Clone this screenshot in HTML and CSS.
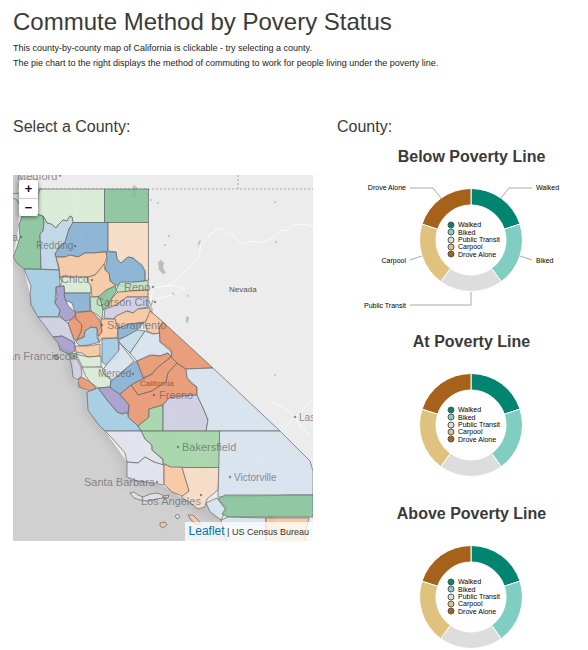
FILE: index.html
```html
<!DOCTYPE html>
<html lang="en">
<head>
<meta charset="utf-8">
<title>Commute Method by Povery Status</title>
<link rel="stylesheet" href="styles.css">
</head>
<body>
<header>
  <h1>Commute Method by Povery Status</h1>
  <p>This county-by-county map of California is clickable - try selecting a county.</p>
  <p>The pie chart to the right displays the method of commuting to work for people living under the poverty line.</p>
</header>
<main class="columns">
  <section>
    <h2>Select a County:</h2>
    <div class="map">
      <svg class="map-canvas" viewBox="13 175 300 366" preserveAspectRatio="xMidYMid slice" role="img" aria-label="Map of California counties">
        <defs>
          <filter id="shade" x="-20%" y="-20%" width="140%" height="140%"><feGaussianBlur stdDeviation="5"/></filter>
        </defs>
        <rect class="sea" x="13" y="175" width="300" height="366"/>
        <path class="coast-shade" filter="url(#shade)" d="M21 175L18 195L19 225L13 257L24 269L30 294L38 317L58 343L70 355L73 377L88 392L88 410L105 431L127 462L127 477L164 486L182 498L200 509L221 520L235 545"/>
        <path class="land" d="M21 175L18 190L19 225L13 257L24 269L30 294L38 317L58 343L75 355L73 377L88 392L88 410L105 431L127 462L127 477L164 486L182 498L200 509L206 503L221 520L227 541H313V175Z"/>
        <g class="roads">
          <path d="M153 288L165 286L172 284L178 277L187 270L193 264L199 257L201 244L208 239L210 234L221 228L226 232L233 235L240 243L243 244L253 241L260 243L271 239L280 231L287 230L292 226L302 224L313 226"/>
          <path d="M153 288L151 299L150 309M165 286L176 286L185 289M185 289L168 296L156 299"/>
          <path d="M295 417L286 409L271 401M295 417L304 409L312 399M295 417L301 428L310 435M295 417L283 430L276 445L257 461L240 471L226 485"/>
          <path d="M72 190L78 202L77 216L85 228L80 247L84 269L91 285L98 300L103 316"/>
          <path d="M103 325L112 350L128 368L150 386L164 403L180 428L196 447L203 468L211 489"/>
          <path d="M78 365L93 385L110 408L126 430L148 450L161 471L185 485L211 497"/>
          <path d="M180 432L215 448L254 461L311 484M110 328L132 321L151 316"/>
        </g>
        <g class="lakes">
          <path d="M133 185L137 187L137 193L134 199L131 197L133 193Z"/>
          <path d="M158 262L161 260L164 263L163 268L166 273L163 274L159 270Z"/>
          <path d="M151 306L153 309L152 314L150 311Z"/>
          <path d="M186 316L189 317L188 323L186 322Z"/>
          <path d="M198 243L200 240L201 241L199 245L199 248ZM172 292L175 294L173 295ZM186 296L189 294L188 297Z"/>
          <path d="M268 513L273 518L280 525L277 529L269 521Z"/>
          <circle cx="139" cy="208" r="1"/><circle cx="151" cy="200" r="1"/><circle cx="158" cy="203" r="1"/><circle cx="169" cy="236" r="1"/><circle cx="165" cy="245" r="1"/><circle cx="275" cy="202" r="1"/><circle cx="276" cy="242" r="1"/><circle cx="275" cy="375" r="1"/>
        </g>
        <path class="state-line" d="M148 189H313M238 175V189M40 189H148V311M152 312L310 461L312 474"/>
        <g class="counties">
          <path class="c-mint" d="M12 194L20 193L32 189H42L40 193L38 208L20 206L17 200L12 197Z"/>
          <path class="c-pale-green" d="M40 189H104.500V222.500H73L72 217L70 216L67 221L63 220L58 225L56 228L51 224L47 223L43 216L37 214L38 195Z"/>
          <path class="c-green" d="M104.500 189H148.500V222.500H104.500Z"/>
          <path class="c-green" d="M22 216L37 214L43 216L44 223L43 231L40 234L41 269H24L17 263L13 257L17 247L20 237L19 225Z"/>
          <path class="c-sky-light" d="M43 216L47 223L51 224L56 228L58 225L63 220L67 221L70 216L72 217L73 223L69 229L67 236L65 242L60 246L55 254L56 257L59 270L41 269L40 234L43 231L44 223Z"/>
          <path class="c-blue" d="M73 222.500H108V251L101 252L93 253H85L78 257L70 255L65 257H56L55 254L60 246L65 242L67 236L69 229Z"/>
          <path class="c-peach" d="M108 222.500H148.500V280L145 281V271L139 265L133 258L128 257L121 263L117 259L116 252L108 251Z"/>
          <path class="c-blue" d="M106 252L116 252L117 259L121 263L128 257L133 258L142 265L145 271V281L135 282L125 287L116 285L110 281L109 273L105 270L107 260Z"/>
          <path class="c-orange" d="M56 257H65L70 255L78 257L85 253L93 253L106 252L107 257L104 265L95 275L88 277H60L59 267Z"/>
          <path class="c-pale-green" d="M60 277H88L87 280L91 284V293H64V286L60 286L62 282Z"/>
          <path class="c-orange" d="M88 277L95 275L104 264L105 270L109 273L110 281L116 286L108 290L104 296L92 297L91 286L87 281Z"/>
          <path class="c-sky" d="M24 269L59 270L60 286L56 287L55 303L60 310L58 317H38L31 305L30 294L31 286Z"/>
          <path class="c-purple" d="M56 287L64 286L65 297L68 306L76 313L75 319L65 321L59 315L60 310L55 303L57 297Z"/>
          <path class="c-blue" d="M64 293H90V311L75 312L72 303L65 300Z"/>
          <path class="c-mint" d="M90 297H100L103 309L102 320L99 316L91 311Z"/>
          <path class="c-green" d="M98 297L106 290L115 286L117 290L112 298L108 306L103 310L100 299Z"/>
          <path class="c-mint" d="M116 290L120 282L135 282L145 281L148 280V290L130 291L118 293Z"/>
          <path class="c-orange" d="M113 297L118 292L130 291L148 290V297L127 297L115 306L108 308L109 303Z"/>
          <path class="c-lavender" d="M104 318L105 309L116 305L127 297H148V307L138 309L133 313L127 311L117 316L113 319Z"/>
          <path class="c-orange" d="M116 316L127 311L133 313L138 309L149 308L152 313L146 321L143 323L130 324L119 328L114 320Z"/>
          <path class="c-orange" d="M150 311L163 322L159 328L160 333L153 334L147 331L145 323Z"/>
          <path class="c-red" d="M68 323L75 315L79 321L82 325L81 332L76 341L73 337Z"/>
          <path class="c-red" d="M75 313L91 311L100 320L102 333L98 336L97 328L91 327L85 331L84 337L77 340L81 332L82 325L76 319Z"/>
          <path class="c-sky" d="M76 342L77 340L84 337L85 331L91 327L97 328V338L100 342L88 345L80 346Z"/>
          <path class="c-orange" d="M101 319L115 319L118 328L117 338L102 338L99 342L98 337L102 332Z"/>
          <path class="c-lavender" d="M38 317H60L68 323L73 337L75 344L62 336L53 337L45 326Z"/>
          <path class="c-purple" d="M53 337L62 336L72 341L75 345V351L69 354L60 350L58 343Z"/>
          <path class="c-green" d="M70 354L77 353V358H71ZM53 356L57 355L59 358L57 360Z"/>
          <path class="c-orange" d="M75 346L88 346L100 344V356L88 357L82 353L76 352Z"/>
          <path class="c-pale-green" d="M76 354L88 357L101 356V367L83 368L79 360Z"/>
          <path class="c-lavender" d="M70 359H77L81 367L82 375L78 380L73 377L72 368Z"/>
          <path class="c-pale-green" d="M82 367H102L105 375L111 380L110 387L98 388L90 382L85 375Z"/>
          <path class="c-red" d="M78 379L82 377L90 382L96 388L90 391L79 387Z"/>
          <path class="c-sky" d="M102 339L118 338L119 350L118 357L106 365L102 362Z"/>
          <path class="c-blue" d="M118 328L130 324L144 322L138 329L128 336L118 339Z"/>
          <path class="c-teal-light" d="M119 340L137 330L145 331L138 342L130 353L119 342Z"/>
          <path class="c-pale-blue" d="M145 331L153 334L160 333V342L170 347L172 357L168 353L160 356L153 355L137 361L130 353Z"/>
          <path class="c-pale-blue" d="M102 371L107 364L119 350V342L134 361L113 380L105 375Z"/>
          <path class="c-blue" d="M111 381L136 361L145 378L136 382L120 394L110 388Z"/>
          <path class="c-red" d="M137 361L150 355L160 356L168 353L171 357L157 368L152 374L143 378Z"/>
          <path class="c-red" d="M131 385L145 378L152 374L157 368L171 357L177 363L168 373L166 382L152 391L138 395Z"/>
          <path class="c-red" d="M120 394L131 385L138 395L152 391L166 382L168 373L177 363L187 370V378L192 384L197 387V395L182 396L169 398L163 405L149 409V417L138 426L128 417L129 405Z"/>
          <path class="c-red" d="M163 322L213 368L186 369L177 363L171 357L172 352L160 342L159 328Z"/>
          <path class="c-purple" d="M98 388L110 387L120 395L129 405L128 413L125 412L122 414L117 412L107 400Z"/>
          <path class="c-sky" d="M87 392L98 388L107 400L117 412L122 414L128 413V417L138 426L141 431H105L98 424L88 410Z"/>
          <path class="c-mint-deep" d="M149 409L163 405V431H141L138 426L149 417Z"/>
          <path class="c-lavender" d="M163 431V405L169 398L182 396L197 395L204 410L208 420L206 431Z"/>
          <path class="c-pale-blue" d="M186 369L213 368L280 431H206L208 420L204 410L197 395V387L187 378Z"/>
          <path class="c-lilac" d="M105 431H142L145 439L152 445V450L163 460V465L154 462L145 457L138 463L127 462L125 453L118 445L113 439Z"/>
          <path class="c-mint-deep" d="M141 431H219.500V467.500H171L163 463V459L152 450V445L145 439Z"/>
          <path class="c-lilac" d="M127 462L138 463L145 457L154 462L164 465V485L147 482L137 481L127 477Z"/>
          <path class="c-orange" d="M164 464L171 467H182L189 490L185 497L172 492L164 484Z"/>
          <path class="c-peach" d="M182 467.500H219.500L218 490L207 499L205 507L198 509L189 502L181 497L189 491Z"/>
          <path class="c-pale-blue" d="M219.500 431H280L310 461L313 471V495L289 495L240 497L218 497Z"/>
          <path class="c-pale-blue" d="M206 503L217 498L226 510L221 520L210 512Z"/>
          <path class="c-green" d="M218 499L225 495L313 495V517H228L222 514L226 508Z"/>
          <path class="c-pale-blue" d="M221 520L228 517L266 518V542H227Z"/>
          <path class="c-orange" d="M266 518H309L305 535L306 542H266Z"/>
          <path class="c-lilac" d="M130 493L134 492L138 495L143 497L150 494L157 493L163 495V498L156 499L148 501L140 500L134 498Z"/>
          <path class="c-orange" d="M160 523L165 522L167 525L163 528L160 526ZM188 515L193 515L198 520L201 524L196 524L191 520ZM163 496L169 495L168 498L163 498Z"/>
          <path class="c-lilac" d="M175 516L178 514L180 517L177 519Z"/>
        </g>
        <g class="places">
          <text x="17" y="180" class="city">Medford</text><circle cx="60" cy="175.500" r="1.200"/>
          <text x="12" y="241" class="city">a</text><circle cx="21" cy="237" r="1.200"/>
          <text x="36" y="249" class="town">Redding</text><circle cx="75" cy="246" r="1.200"/>
          <text x="61" y="283" class="city">Chico</text><circle cx="92" cy="280" r="1.200"/>
          <text x="124" y="291" class="city">Reno</text><circle cx="153" cy="287" r="1.200"/>
          <text x="96" y="306" class="city">Carson City</text><circle cx="155" cy="302" r="1.200"/>
          <text x="107" y="329" class="city">Sacramento</text><circle cx="102" cy="325" r="1.200"/>
          <text x="71" y="360" text-anchor="end" class="city">an Francisco</text><circle cx="74" cy="356" r="1.200"/>
          <text x="98" y="377" class="town">Merced</text><circle cx="133" cy="374" r="1.200"/>
          <text x="140" y="386" class="state in-state">California</text>
          <text x="159" y="399" class="city">Fresno</text><circle cx="154" cy="395" r="1.200"/>
          <text x="229" y="292" class="state">Nevada</text>
          <text x="182" y="451" class="city">Bakersfield</text><circle cx="178" cy="447" r="1.200"/>
          <text x="299" y="421" class="town">Las</text><circle cx="295" cy="417" r="1.200"/>
          <text x="234" y="481" class="town">Victorville</text><circle cx="230" cy="477" r="1.200"/>
          <text x="84" y="486" class="city">Santa Barbara</text><circle cx="157" cy="482" r="1.200"/>
          <text x="141" y="505" class="city">Los Angeles</text><circle cx="201" cy="495" r="1.200"/>
        </g>
      </svg>
      <div class="zoom">
        <button type="button" aria-label="Zoom in">+</button>
        <button type="button" aria-label="Zoom out">−</button>
      </div>
      <div class="attribution"><a href="#">Leaflet</a> | US Census Bureau</div>
    </div>
  </section>
  <section>
    <h2>County:</h2>
    <div class="charts">
      <h3>Below Poverty Line</h3>
      <svg class="chart" width="233" height="165" viewBox="-116 -73 233 165" role="img" aria-label="Commute methods below the poverty line">
        <defs>
          <g id="ring" class="ring">
            <path class="walked" d="M0 -51.500A51.500 51.500 0 0 1 48.980 -15.910L33.290 -10.820A35 35 0 0 0 0 -35Z"/>
            <path class="biked" d="M48.980 -15.910A51.500 51.500 0 0 1 30.270 41.660L20.570 28.320A35 35 0 0 0 33.290 -10.820Z"/>
            <path class="transit" d="M30.270 41.660A51.500 51.500 0 0 1 -30.270 41.660L-20.570 28.320A35 35 0 0 0 20.570 28.320Z"/>
            <path class="carpool" d="M-30.270 41.660A51.500 51.500 0 0 1 -48.980 -15.910L-33.290 -10.820A35 35 0 0 0 -20.570 28.320Z"/>
            <path class="drove" d="M-48.980 -15.910A51.500 51.500 0 0 1 0 -51.500L0 -35A35 35 0 0 0 -33.290 -10.820Z"/>
          </g>
          <g id="dots" class="dots">
            <circle class="walked" cx="-20" cy="-15" r="3"/>
            <circle class="biked" cx="-20" cy="-8" r="3"/>
            <circle class="transit" cx="-20" cy="0" r="3"/>
            <circle class="carpool" cx="-20" cy="7" r="3"/>
            <circle class="drove" cx="-20" cy="14" r="3"/>
          </g>
        </defs>
        <path class="leader" d="M30 -42L38 -52H61M49 16L61 20M0 51V65H-61M-49 16L-61 20M-30 -42L-38 -52H-61"/>
        <use href="#ring"/><use href="#dots"/>
        <g class="legend">
          <text x="-13" y="-13">Walked</text><text x="-13" y="-5">Biked</text><text x="-13" y="2">Public Transit</text><text x="-13" y="9">Carpool</text><text x="-13" y="17">Drove Alone</text>
        </g>
        <g class="legend">
          <text x="65" y="-50">Walked</text><text x="65" y="23">Biked</text>
          <g text-anchor="end"><text x="-65" y="68">Public Transit</text><text x="-65" y="23">Carpool</text><text x="-65" y="-50">Drove Alone</text></g>
        </g>
      </svg>
      <h3>At Poverty Line</h3>
      <svg class="chart" width="233" height="152" viewBox="-116 -73 233 152" role="img" aria-label="Commute methods at the poverty line">
        <use href="#ring"/><use href="#dots"/>
        <g class="legend">
          <text x="-13" y="-13">Walked</text><text x="-13" y="-5">Biked</text><text x="-13" y="2">Public Transit</text><text x="-13" y="9">Carpool</text><text x="-13" y="17">Drove Alone</text>
        </g>
      </svg>
      <h3>Above Poverty Line</h3>
      <svg class="chart" width="233" height="125" viewBox="-116 -73 233 125" role="img" aria-label="Commute methods above the poverty line">
        <use href="#ring"/><use href="#dots"/>
        <g class="legend">
          <text x="-13" y="-13">Walked</text><text x="-13" y="-5">Biked</text><text x="-13" y="2">Public Transit</text><text x="-13" y="9">Carpool</text><text x="-13" y="17">Drove Alone</text>
        </g>
      </svg>
    </div>
  </section>
</main>
</body>
</html>
```
FILE: styles.css
```css
* { box-sizing: border-box; }
body {
  margin: 0;
  padding: 6px 0 0 13px;
  background: #fff;
  color: #333;
  font-family: "Liberation Sans", Arial, sans-serif;
}
h1, h2, h3, p { margin: 0; }
h1 { font-size: 24px; line-height: 32px; font-weight: 400; margin-bottom: 3px; color: #3a3a38; }
p { font-size: 9px; line-height: 15px; color: #222; }
h2 { font-size: 16px; line-height: 20px; font-weight: 400; color: #3a3a38; }
h3 { font-size: 16px; line-height: 20px; font-weight: 700; text-align: center; color: #3a3a38; }

.columns {
  display: grid;
  grid-template-columns: 300fr 251fr;
  column-gap: 24px;
  margin-top: 46px;
}
.map {
  position: relative;
  margin-top: 38px;
  aspect-ratio: 300 / 366;
  overflow: hidden;
}
.map-canvas { display: block; width: 100%; height: 100%; }
.sea { fill: #d0d0d0; }
.land { fill: #ececec; }
.coast-shade { fill: none; stroke: #aaa; stroke-width: 7; opacity: .7; }
.roads { fill: none; stroke: #fafafa; stroke-width: 1; }
.lakes { fill: #bdbdbd; }
.state-line { fill: none; stroke: #aaa; stroke-width: 1; stroke-dasharray: 2 2; }
.counties { stroke: #666; stroke-opacity: .7; stroke-width: 1; stroke-linejoin: round; fill-opacity: .85; }
.c-green { fill: #81c297; }
.c-mint { fill: #bee2bf; }
.c-mint-deep { fill: #9fd4a3; }
.c-pale-green { fill: #d7ebd5; }
.c-blue { fill: #80add1; }
.c-sky { fill: #9dcae3; }
.c-sky-light { fill: #bdd6e8; }
.c-teal-light { fill: #c1dce7; }
.c-pale-blue { fill: #d6e3ef; }
.c-peach { fill: #f7dac2; }
.c-orange { fill: #fac69c; }
.c-red { fill: #e99068; }
.c-purple { fill: #a196cb; }
.c-lavender { fill: #cecbe2; }
.c-lilac { fill: #e2e2ee; }
.places { fill: #555; fill-opacity: .65; }
.city { font-size: 11px; }
.town { font-size: 10px; }
.state { font-size: 8px; fill-opacity: 1; }
.in-state { fill: #a0583a; }

.zoom {
  position: absolute;
  top: 5px;
  left: 6px;
  width: 19px;
  border-radius: 3px;
  overflow: hidden;
  background: #fff;
  box-shadow: 0 1px 4px rgba(0, 0, 0, .55);
}
.zoom button {
  display: block;
  width: 100%;
  height: 18px;
  padding: 0;
  border: 0;
  background: #fff;
  color: #111;
  font: 700 13px/18px "Liberation Sans", Arial, sans-serif;
}
.zoom button + button { border-top: 1px solid #ccc; }
.attribution {
  position: absolute;
  right: 0;
  bottom: 0;
  padding: 0 4px;
  background: rgba(255, 255, 255, .75);
  font-size: 9px;
  line-height: 18px;
  color: #333;
}
.attribution a { font-size: 12px; color: #0078a8; text-decoration: none; }

.charts { margin: 10px 0 0 18px; }
.chart { display: block; margin: 0 auto; overflow: visible; }
.walked { fill: #018571; }
.biked { fill: #80cdc1; }
.transit { fill: #ddd; }
.carpool { fill: #dfc27d; }
.drove { fill: #a6611a; }
.ring { stroke: #fff; stroke-width: 1; }
.dots { stroke: #555; stroke-width: 1; }
.leader { fill: none; stroke: #aaa; stroke-width: 1; }
.legend { font-size: 7px; fill: #000; }
```
